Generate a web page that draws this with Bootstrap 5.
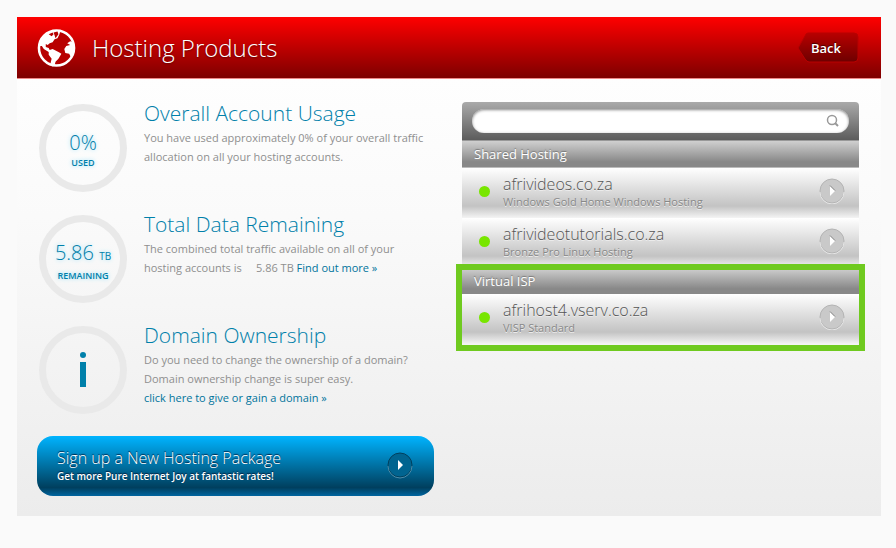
<!DOCTYPE html>
<html lang="en">
<head>
<meta charset="utf-8">
<meta name="viewport" content="width=device-width, initial-scale=1">
<title>Hosting Products</title>
<link href="https://cdn.jsdelivr.net/npm/bootstrap@5.3.0/dist/css/bootstrap.min.css" rel="stylesheet">
<style>
body{background:#fafafa;font-family:"Open Sans","Noto Sans",sans-serif;font-size:11px;line-height:19px;color:#8f8f8f;padding:17px 15px 0 17px}
a{text-decoration:none;color:#00749c}
.panel{background:linear-gradient(#fefefe 60px,#fafafa 40%,#ececec);padding-bottom:20px}
.topbar{background:linear-gradient(#f00,#7d0000);border-bottom:1px solid #e88;height:62px;padding:0 22px 0 20px}
.topbar h1{font-size:24px;font-weight:300;line-height:32px;color:#fff;text-shadow:0 1px 2px #600}
.back-btn{width:62px;height:32px;padding:0 4px 0 0;border:0;background:none;color:#fff;font-size:13px;font-weight:600;line-height:26px;text-shadow:0 -1px 1px #400}
.back-btn svg{left:0;top:0}
.main-area{padding:21px 22px 0 20px;display:grid;grid-template-columns:1fr 1fr;column-gap:28px}
.hosting-col{padding-top:2px}
.usage-row{height:111px;padding-left:2px;gap:17px}
.ring{width:88px;height:88px;border:7px solid #e9e9e9;border-radius:50%;color:#0080aa;text-shadow:0 0 4px #8edcf8;margin-top:4px}
.ring strong{font-size:9px;line-height:14px;font-weight:600}
.big-num{font-size:20px;line-height:26px;font-weight:300}
.big-num small{font-size:10px;font-weight:400}
.usage-row h2{font-size:21px;line-height:26px;font-weight:300;color:#0080aa;margin:0 0 2px}
.signup{height:60px;margin-top:3px;padding:0 20px 2px;border:0;border-radius:16px;color:#fff;background:linear-gradient(#00b4ff,#003f5e 86%,#0065a0);text-shadow:0 -1px 1px #024}
.signup .big-line{font-size:16px;line-height:22px;font-weight:300}
.signup .sub-line{font-size:10px;line-height:14px;font-weight:600}
.search-bar{height:39px;padding:7px 10px 8px;background:linear-gradient(#aaa,#5c5c5c);border-radius:4px 4px 0 0;border-bottom:1px solid #999}
.search-bar input{height:24px;border:0;border-radius:12px;box-shadow:inset 0 1px 3px #888;padding:0 34px 0 12px;font-size:12px}
.search-bar button{right:8px;top:4px}
.group-head{height:27px;margin:0;padding:0 12px;font-size:13px;line-height:26px;font-weight:500;color:#fff;background:linear-gradient(#d0d0d0,#888 80%);border-bottom:1px solid #bbb;text-shadow:0 -1px 1px #777}
.host-row{height:50px;padding:0 14px 4px 17px;background:linear-gradient(#fff,#c3c3c3 76%,#f4f4f4);color:#888;text-shadow:0 1px 0 #eee;gap:13px}
.led{width:11px;height:11px;border-radius:50%;background:#78e600}
.host-name{font-size:16px;line-height:20px;font-weight:300;color:#555}
.host-plan{font-size:11px;line-height:15px}
.mark-box{inset:-4px -6px -7px;border:6px solid #6fca1f;pointer-events:none}
.marked .group-head{height:26px;border:0}
</style>
<script src="https://cdn.jsdelivr.net/npm/bootstrap@5.3.0/dist/js/bootstrap.bundle.min.js"></script>
</head>
<body>
<svg width="0" height="0" class="position-absolute"><defs>
<linearGradient id="bk" x2="0" y2="1"><stop stop-color="#b80000"/><stop offset="1" stop-color="#6d0000"/></linearGradient>
<symbol id="go" viewBox="0 0 26 26"><circle cx="13" cy="13" r="12" fill="#c9c9c9" stroke="#b4b4b4"/><path d="M1 14a12 12 0 0 0 24 0" fill="none" stroke="#e4e4e4"/><path d="M11 8l5 5-5 5z" fill="#fff"/><path d="M11 7.500l5 5" stroke="#888"/></symbol>
</defs></svg>
<div class="panel">
<header class="topbar d-flex align-items-center justify-content-between">
 <div class="d-flex align-items-center gap-3">
  <svg width="39" height="40" viewBox="0 0 40 40" aria-hidden="true"><circle cx="20" cy="20" r="18" fill="#b80000" stroke="#fff" stroke-width="2.600"/><path fill="#fff" d="M2 18L4 11 9 5l7-3h8l-1 4-2 4-3 1-2 3-3 1-2 2-2-1v3l3 1 1 2 3-1 6 3 3 2-3 5-3 3-1 4-2 1-2-4 1-4-3-4v-3l-5-3-2-3zM38 14l-4-1-3 2 3 2-4 1-2 3 1 4 4 1 2 4 3-6z"/><path fill="#b80000" d="M12 6l4-2 1 2-2 2zM17 4l4-1 1 3-3 4-1-3zM28 6l3 2 2 3-4 1z"/></svg>
  <h1 class="mb-0">Hosting Products</h1>
 </div>
 <button type="button" class="back-btn position-relative"><svg class="position-absolute" width="62" height="32" viewBox="0 0 62 32"><path d="M11 1H57q4 0 4 4V26q0 4-4 4H12q-2 0-4-3L1 16 8 4q1-3 3-3z" fill="url(#bk)" stroke="#b80000"/></svg><span class="position-relative">Back</span></button>
</header>
<main class="main-area">
 <div>
  <section class="usage-row d-flex"><div><div class="ring pt-1 d-flex flex-column align-items-center justify-content-center"><span class="big-num">0%</span><strong>USED</strong></div></div><div><h2>Overall Account Usage</h2>You have used approximately 0% of your overall traffic<br>allocation on all your hosting accounts.</div></section>
  <section class="usage-row d-flex"><div><div class="ring pt-1 d-flex flex-column align-items-center justify-content-center"><span class="big-num">5.86 <small>TB</small></span><strong>REMAINING</strong></div></div><div><h2>Total Data Remaining</h2>The combined total traffic available on all of your<br>hosting accounts is &nbsp;&nbsp;&nbsp; 5.86 TB <a href="#">Find out more »</a></div></section>
  <section class="usage-row d-flex"><div><div class="ring d-flex align-items-center justify-content-center"><svg width="8" height="38" viewBox="0 0 8 38"><circle cx="4" cy="4" r="3" fill="#0080aa"/><path d="M1 11h6v25H1z" fill="#0080aa"/></svg></div></div><div><h2>Domain Ownership</h2>Do you need to change the ownership of a domain?<br>Domain ownership change is super easy.<br><a href="#">click here to give or gain a domain »</a></div></section>
  <button type="button" class="signup w-100 d-flex align-items-center justify-content-between text-start"><span><span class="big-line d-block">Sign up a New Hosting Package</span><span class="sub-line d-block">Get more Pure Internet Joy at fantastic rates!</span></span><svg width="28" height="28" viewBox="0 0 28 28"><circle cx="14" cy="14" r="12" fill="#006490" stroke="#00405e"/><path d="M2 15a12 12 0 0 0 24 0" fill="none" stroke="#4d8aa6"/><path d="M12 9l5 5-5 5z" fill="#fff"/></svg></button>
 </div>
 <div class="hosting-col">
  <form class="search-bar"><div class="position-relative"><input type="search" aria-label="Search" class="w-100 d-block"><button type="button" aria-label="Go" class="position-absolute border-0 bg-transparent p-0 d-flex"><svg width="16" height="16" viewBox="0 0 16 16" fill="none" stroke="#999"><circle cx="7" cy="7" r="4.500" stroke-width="1.500"/><path d="M10 10l3 3" stroke-width="2"/></svg></button></div></form>
  <h3 class="group-head">Shared Hosting</h3>
  <a href="#" class="host-row d-flex align-items-center"><span class="led"></span><span class="flex-grow-1"><span class="host-name d-block">afrivideos.co.za</span><span class="host-plan d-block">Windows Gold Home Windows Hosting</span></span><svg width="26" height="26"><use href="#go"/></svg></a>
  <a href="#" class="host-row d-flex align-items-center"><span class="led"></span><span class="flex-grow-1"><span class="host-name d-block">afrivideotutorials.co.za</span><span class="host-plan d-block">Bronze Pro Linux Hosting</span></span><svg width="26" height="26"><use href="#go"/></svg></a>
  <div class="marked position-relative"><h3 class="group-head">Virtual ISP</h3>
  <a href="#" class="host-row d-flex align-items-center"><span class="led"></span><span class="flex-grow-1"><span class="host-name d-block">afrihost4.vserv.co.za</span><span class="host-plan d-block">VISP Standard</span></span><svg width="26" height="26"><use href="#go"/></svg></a><div class="mark-box position-absolute"></div></div>
 </div>
</main>
</div>
</body>
</html>
